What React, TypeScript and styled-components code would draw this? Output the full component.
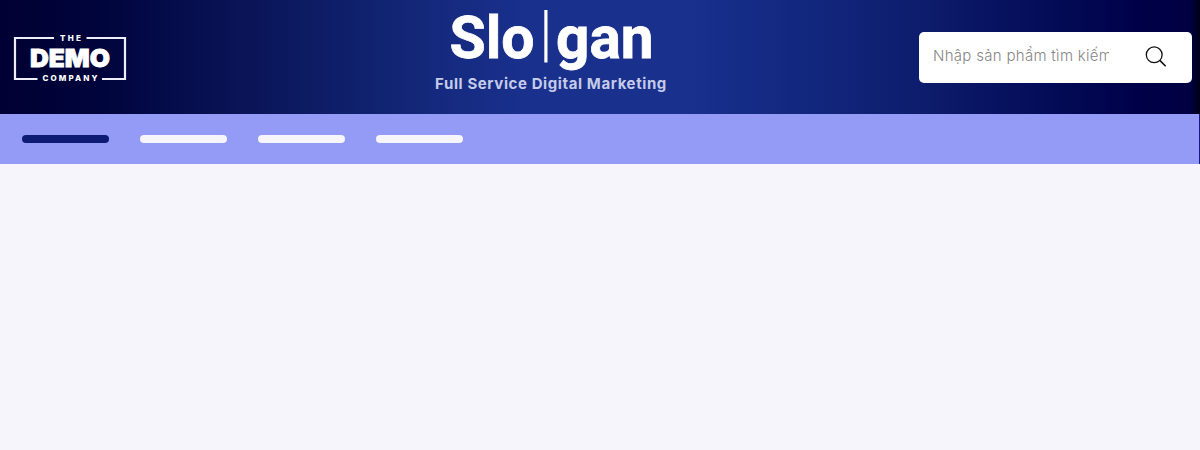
import React from "react";
import styled, { createGlobalStyle } from "styled-components";

const GlobalStyle = createGlobalStyle`
  * { box-sizing: border-box; }
  body {
    margin: 0;
    background: #f5f5fb;
    font-family: Inter, "Liberation Sans", sans-serif;
  }
`;

const Header = styled.header`
  display: flex;
  height: 114px;
  padding: 0 8px 0 12px;
  background: linear-gradient(
    90deg,
    #000033 0%,
    #00043b 8%,
    #030a48 13%,
    #0a1456 20%,
    #10226f 31%,
    #152a7f 37%,
    #19308d 44%,
    #19308d 57%,
    #122880 66%,
    #0d1c6c 77%,
    #030b56 88%,
    #000048 95%,
    #000042 99.2%,
    #000018 100%
  );
`;

const CompanyLogo = styled.svg`
  width: 117px;
  height: 52px;
  margin-top: 32px;
  fill: #fff;
`;

const Brand = styled.div`
  display: flex;
  flex-direction: column;
  align-items: center;
  width: 234px;
  margin-left: 305px;
`;

const SloganLogo = styled.svg`
  width: 210px;
  height: 74px;
  fill: #fff;
`;

const Tagline = styled.p`
  margin: 0;
  color: #c5cbe9;
  font-size: 15px;
  font-weight: 700;
  line-height: 19px;
  letter-spacing: 0.6px;
  white-space: nowrap;
`;

const SearchBox = styled.form`
  display: flex;
  align-items: center;
  justify-content: space-between;
  width: 273px;
  height: 51px;
  margin: 32px 0 0 auto;
  padding: 0 24px 2px 14px;
  border-radius: 5px;
  background: #fff;
`;

const SearchInput = styled.input`
  width: 176px;
  height: 30px;
  padding: 0 0 2px;
  border: 0;
  outline: 0;
  background: transparent;
  color: #222;
  font: 300 15px Inter, "Liberation Sans", sans-serif;
  letter-spacing: 0.3px;
  &::placeholder { color: #868686; opacity: 1; }
`;

const SearchButton = styled.button`
  display: flex;
  padding: 0;
  border: 0;
  background: transparent;
`;

const Nav = styled.nav`
  display: flex;
  gap: 31px;
  height: 50px;
  padding: 21px 22px 0;
  border-right: 1px solid #17178a;
  background: #939bf6;
`;

const NavItem = styled.span<{ $active?: boolean }>`
  width: 87px;
  height: 8px;
  border-radius: 4px;
  background: ${(p) => (p.$active ? "#0d1c72" : "#f5f5fb")};
`;

export default function App() {
  return (
    <>
      <GlobalStyle />
      <Header>
        <CompanyLogo viewBox="12 32 117 52" role="img" aria-label="The Demo Company">
          <path
            d="M54 38H15V79H37.5M86.500 38H125V79H102"
            fill="none"
            stroke="#eeeef8"
            strokeWidth="2.2"
          />
          <g fontFamily="Inter, sans-serif">
            <text x="60" y="41" fontSize="8" fontWeight="800" textLength="21" lengthAdjust="spacing">THE</text>
            <text x="30" y="67" fontSize="25" fontWeight="900" stroke="#fff" strokeWidth=".8" textLength="80" lengthAdjust="spacingAndGlyphs">DEMO</text>
            <text x="42.500" y="81" fontSize="8" fontWeight="800" textLength="55" lengthAdjust="spacing">COMPANY</text>
          </g>
        </CompanyLogo>
        <Brand>
          <SloganLogo viewBox="446 0 210 74" role="img" aria-label="Slogan">
            <g fontFamily="Roboto, sans-serif" fontWeight="700" fontSize="60" stroke="#fff" strokeWidth=".8">
              <text x="449.500" y="57.500" textLength="85" lengthAdjust="spacingAndGlyphs">Slo</text>
              <text x="556" y="57.500" textLength="97.500" lengthAdjust="spacingAndGlyphs">gan</text>
            </g>
            <rect x="544.300" y="10" width="3.200" height="52.500" />
          </SloganLogo>
          <Tagline>Full Service Digital Marketing</Tagline>
        </Brand>
        <SearchBox onSubmit={(e) => e.preventDefault()}>
          <SearchInput placeholder="Nhập sản phẩm tìm kiếm" />
          <SearchButton type="submit" aria-label="Tìm kiếm">
            <svg width="24" height="24" viewBox="0 0 24 24" fill="none" stroke="#111" strokeWidth="1.300">
              <circle cx="10.200" cy="9.800" r="7.900" />
              <path d="M15.800 15.400L21.700 21.300" strokeWidth="1.600" />
            </svg>
          </SearchButton>
        </SearchBox>
      </Header>
      <Nav>
        <NavItem $active />
        <NavItem />
        <NavItem />
        <NavItem />
      </Nav>
    </>
  );
}
